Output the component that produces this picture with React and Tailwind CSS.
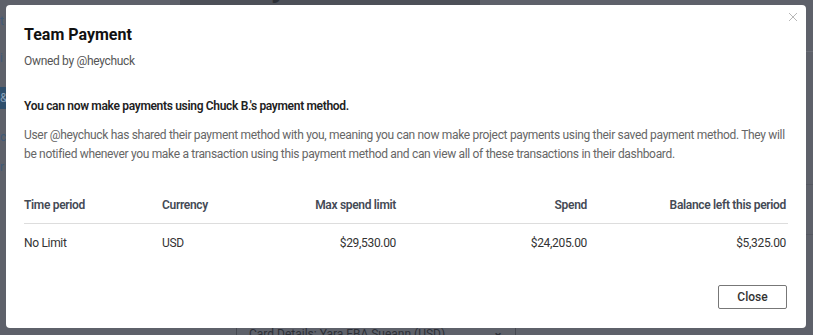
import React from "react";

export default function App() {
  return (
    <div className="relative w-[813px] h-[335px] overflow-hidden bg-[#5e616a] font-['Roboto',sans-serif]">
      {/* dimmed page behind */}
      <div className="flex h-full">
        <div className="w-[40px] shrink-0 flex flex-col text-[12px] leading-[18px] text-[#3f5a78] pt-[12px]">
          <div className="h-[18px]">t</div>
          <div className="h-[18px] mt-[19px]">i</div>
          <div className="h-[22px] mt-[20px] bg-[#2f4f6c] text-[#8aa0b8] leading-[22px]">&amp;</div>
          <div className="h-[18px] mt-[19px]">c</div>
          <div className="h-[18px] mt-[12px]">r</div>
        </div>
        <div className="w-[140px] shrink-0" />
        <div className="w-[300px] shrink-0 flex flex-col">
          <div className="h-[5px] bg-[#4d5058] overflow-hidden relative">
            <div className="absolute left-[56px] -top-[30px] text-[30px] leading-[34px] font-bold text-[#2c2f36] whitespace-nowrap">Payment &amp; Financial</div>
          </div>
          <div className="flex-1" />
          <div className="h-[12px] ml-[56px] w-[280px] border-x border-[#464951] flex items-end justify-between px-[12px] text-[12px] leading-[12px] text-[#2c2f36]">
            <span className="translate-y-[5px]">Card Details: Yara FBA Sueann (USD)</span>
            <span className="translate-y-[3px] font-bold">⌄</span>
          </div>
        </div>
        <div className="flex-1 flex flex-col">
          <div className="h-[52px] border-b border-[#6b6e77]" />
          <div className="h-[133px] border-b border-[#555861]" />
          <div className="h-[50px] border-b border-[#555861]" />
        </div>
      </div>

      {/* modal */}
      <div className="absolute left-[6px] top-[5px] w-[800px] h-[323px] bg-white rounded-[4px] px-[18px] pt-[18px]">
        <button className="absolute right-[8px] top-[7px] w-[10px] h-[10px] text-[#b8b8b8]">
          <svg viewBox="0 0 10 10" width="10" height="10" className="block">
            <path d="M1 1 L9 9 M9 1 L1 9" stroke="currentColor" strokeWidth="1" fill="none" />
          </svg>
        </button>
        <h2 className="text-[16px] leading-[24px] font-bold text-[#111]">Team Payment</h2>
        <div className="mt-[5px] text-[12px] tracking-[-0.32px] leading-[18px] text-[#555]">Owned by @heychuck</div>
        <div className="mt-[27px] text-[12px] tracking-[-0.32px] leading-[18px] font-semibold text-[#222]">
          You can now make payments using Chuck B.'s payment method.
        </div>
        <p className="mt-[11px] text-[12px] tracking-[-0.32px] leading-[19px] text-[#666] pr-[2px]">
          User @heychuck has shared their payment method with you, meaning you can now make project payments using their saved payment method. They will be notified whenever you make a transaction using this payment method and can view all of these transactions in their dashboard.
        </p>
        <div className="mt-[32px] text-[12px] tracking-[-0.32px] leading-[18px]">
          <div className="grid grid-cols-[138px_100px_134px_191px_199px] border-b border-[#dddddd] pb-[9px] font-semibold text-[#444a55]">
            <div>Time period</div>
            <div>Currency</div>
            <div className="text-right">Max spend limit</div>
            <div className="text-right">Spend</div>
            <div className="text-right">Balance left this period</div>
          </div>
          <div className="grid grid-cols-[138px_100px_134px_191px_199px] pt-[10px] text-[#333]">
            <div>No Limit</div>
            <div>USD</div>
            <div className="text-right">$29,530.00</div>
            <div className="text-right">$24,205.00</div>
            <div className="text-right">$5,325.00</div>
          </div>
        </div>
        <div className="flex justify-end mt-[33px] pr-[1px]">
          <button className="w-[69px] h-[24px] border border-[#777] rounded-[2px] text-[12px] font-medium text-[#333]">
            Close
          </button>
        </div>
      </div>
    </div>
  );
}
